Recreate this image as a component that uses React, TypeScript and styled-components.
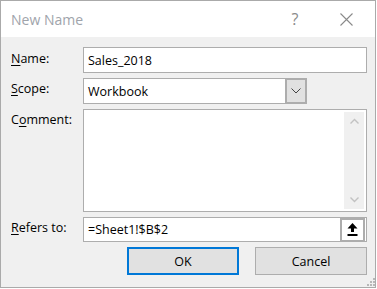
import styled, { createGlobalStyle } from 'styled-components';

const GlobalStyle = createGlobalStyle`
  html, body {
    margin: 0;
    padding: 0;
    background: #ffffff;
  }
  body {
    font-family: "Open Sans", "Liberation Sans", Arial, sans-serif;
  }
`;

const Window = styled.div`
  position: relative;
  width: 376px;
  height: 288px;
  box-sizing: border-box;
  border: 1px solid #aaaaaa;
  background: #f0f0f0;
  display: flex;
  flex-direction: column;
`;

const TitleBar = styled.div`
  height: 36px;
  background: #ffffff;
  display: flex;
  align-items: center;
  padding-left: 10px;
`;

const Title = styled.div`
  flex: 1;
  font-size: 14px;
  color: #a0a4ab;
`;

const TitleButton = styled.div<{ $w: number }>`
  width: ${p => p.$w}px;
  height: 36px;
  display: flex;
  align-items: center;
  justify-content: center;
  color: #8a8a8a;
  font-size: 16px;
`;

const Body = styled.div`
  flex: 1;
  padding: 10px 8px 10px 10px;
  display: grid;
  grid-template-columns: 72px 1fr;
  grid-template-rows: 26px 27px 104px 26px 28px;
  row-gap: 4px;
`;

const Label = styled.div`
  font-size: 12.5px;
  color: #000;
  padding-top: 3px;
  line-height: 17px;
  u {
    text-decoration: underline;
    text-underline-offset: 2px;
  }
`;

const Field = styled.div`
  box-sizing: border-box;
  border: 1px solid #adadad;
  background: #ffffff;
  display: flex;
  align-items: center;
  font-size: 12.5px;
  color: #000;
  padding-left: 4px;
`;

const Combo = styled.div`
  display: flex;
  width: 224px;
  margin-top: 1px;
`;

const ComboText = styled(Field)`
  flex: 1;
  border-right: none;
`;

const ComboButton = styled.div`
  width: 22px;
  box-sizing: border-box;
  border: 2px solid #adadad;
  background: #e1e1e1;
  display: flex;
  align-items: center;
  justify-content: center;
`;

const TextArea = styled.div`
  box-sizing: border-box;
  border: 1px solid #adadad;
  background: #ffffff;
  display: flex;
  justify-content: flex-end;
  padding: 2px 2px 2px 0;
  margin-top: 1px;
`;

const ScrollBar = styled.div`
  width: 20px;
  background: #f0f0f0;
  display: flex;
  flex-direction: column;
  justify-content: space-between;
  align-items: center;
  padding: 6px 0;
`;

const RefField = styled(Field)`
  padding-right: 1px;
  margin-top: 1px;
`;

const RefText = styled.div`
  flex: 1;
`;

const RefButton = styled.div`
  width: 25px;
  height: 24px;
  box-sizing: border-box;
  border: 2px solid #adadad;
  background: #ffffff;
  display: flex;
  align-items: center;
  justify-content: center;
`;

const ButtonRow = styled.div`
  grid-column: 1 / 3;
  display: flex;
  justify-content: flex-end;
  gap: 16px;
  margin-top: 1px;
`;

const Button = styled.div<{ $default?: boolean }>`
  width: 112px;
  height: 28px;
  box-sizing: border-box;
  background: #e1e1e1;
  border: ${p => (p.$default ? '2px solid #0078d7' : '1px solid #adadad')};
  display: flex;
  align-items: center;
  justify-content: center;
  font-size: 12.5px;
  color: #000;
`;

const Grip = styled.svg`
  position: absolute;
  right: 0;
  bottom: 0;
`;

const Chevron = ({ up }: { up?: boolean }) => (
  <svg width="9" height="6" viewBox="0 0 9 6">
    <path
      d={up ? 'M0.5 5.5 L4.5 1.5 L8.5 5.5' : 'M0.5 0.5 L4.5 4.5 L8.5 0.5'}
      fill="none"
      stroke="#c2c2c2"
      strokeWidth="1.4"
    />
  </svg>
);

function App() {
  return (
    <>
      <GlobalStyle />
      <Window>
        <TitleBar>
          <Title>New Name</Title>
          <TitleButton $w={44}>?</TitleButton>
          <TitleButton $w={58}>
            <svg width="13" height="13" viewBox="0 0 13 13">
              <path d="M0.5 0.5 L12.5 12.5 M12.5 0.5 L0.5 12.5" stroke="#8a8a8a" strokeWidth="1.1" />
            </svg>
          </TitleButton>
        </TitleBar>
        <Body>
          <Label>
            <u>N</u>ame:
          </Label>
          <Field>Sales_2018</Field>

          <Label>
            <u>S</u>cope:
          </Label>
          <Combo>
            <ComboText>Workbook</ComboText>
            <ComboButton>
              <svg width="10" height="6" viewBox="0 0 10 6">
                <path d="M0.5 0.5 L5 5 L9.5 0.5" fill="none" stroke="#444" strokeWidth="1" />
              </svg>
            </ComboButton>
          </Combo>

          <Label>
            C<u>o</u>mment:
          </Label>
          <TextArea>
            <ScrollBar>
              <Chevron up />
              <Chevron />
            </ScrollBar>
          </TextArea>

          <Label>
            <u>R</u>efers to:
          </Label>
          <RefField>
            <RefText>=Sheet1!$B$2</RefText>
            <RefButton>
              <svg width="11" height="13" viewBox="0 0 11 13">
                <path d="M5.5 0 L10.5 5.5 L7 5.5 L7 9 L4 9 L4 5.5 L0.5 5.5 Z" fill="#000" />
                <rect x="0.5" y="11" width="10" height="2" fill="#000" />
              </svg>
            </RefButton>
          </RefField>

          <ButtonRow>
            <Button $default>OK</Button>
            <Button>Cancel</Button>
          </ButtonRow>
        </Body>
        <Grip width="11" height="11" viewBox="0 0 11 11">
          {[
            [9, 1], [9, 4], [9, 7], [6, 4], [6, 7], [3, 7],
          ].map(([x, y], i) => (
            <rect key={i} x={x} y={y + 1} width="2" height="2" fill="#b8b8b8" />
          ))}
        </Grip>
      </Window>
    </>
  );
}

export default App;
